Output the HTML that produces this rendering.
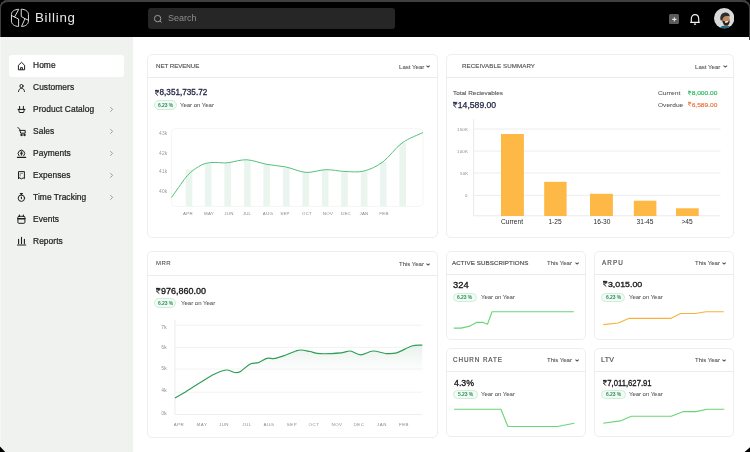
<!DOCTYPE html>
<html><head><meta charset="utf-8"><style>
html,body{margin:0;padding:0;background:#000;width:750px;height:452px;overflow:hidden}
*{box-sizing:border-box}
.frame{position:absolute;left:0;top:0;width:750px;height:452px;background:#fff;border-radius:8px 8px 0 0;overflow:hidden;font-family:"Liberation Sans", sans-serif}
.t{position:absolute;white-space:nowrap;font-family:"Liberation Sans", sans-serif;will-change:transform}
.hdr{position:absolute;left:0;top:0;width:750px;height:37px;background:#000}
.hb{position:absolute;left:0;top:0;width:750px;height:40px;border-top:2px solid #404040;border-left:1.2px solid #404040;border-right:1.2px solid #404040;border-radius:8px 8px 0 0}
.hdr .t{}
.search{position:absolute;left:148px;top:8px;width:247px;height:21px;background:#262626;border-radius:3px}
.side{position:absolute;left:0;top:37px;width:133.4px;height:415px;background:#f0f2ef;border-left:1px solid #f6f7f5}
.card{position:absolute;border:1px solid #eeeeee;border-radius:5px;background:#fff}
</style></head><body><div class="frame">
<div class="hdr"><svg style="position:absolute;left:0;top:0" width="40" height="36" viewBox="0 0 40 36" fill="none" stroke="#e6e6e6" stroke-width="0.95" stroke-linejoin="round" stroke-linecap="round">
<path d="M18.4 9.3 C14.4 9.5 11.5 11.4 11.45 14.4 L11.45 21.2 C11.6 24.3 14.6 26.3 18.6 26.45 L18.6 19 L14.9 17.2 Z M11.45 15.5 L14.9 17.2"/>
<path d="M21.6 9.2 C25.5 9.3 28.4 11.5 28.45 14.4 L28.45 21.2 C28.3 24.3 25.4 26.3 21.5 26.45 L25 18.7 L21.6 16.7 Z M25 18.7 L28.45 20.2"/>
</svg>
<div class="t" style="left:34.90px;top:10.94px;font-size:13.30px;line-height:13.30px;color:#e8e8e8;font-weight:400;letter-spacing:0.75px;">Billing</div>
<div class="search"></div><svg style="position:absolute;left:153px;top:13.7px" width="10" height="10" viewBox="0 0 10 10" fill="none" stroke="#9a9a9a" stroke-width="1"><circle cx="4.6" cy="4.6" r="3.2"/><path d="M7 7 L8.6 8.6"/></svg>
<div class="t" style="left:167.70px;top:14.38px;font-size:9.00px;line-height:9.00px;color:#8d8d8d;font-weight:400;letter-spacing:0.00px;">Search</div>
<div style="position:absolute;left:668.7px;top:13.6px;width:10.7px;height:10.7px;background:#5b5b5b;border-radius:1.5px"></div>
<svg style="position:absolute;left:668.7px;top:13.6px" width="11" height="11" viewBox="0 0 11 11"><path d="M5.35 3.2 V7.5 M3.2 5.35 H7.5" stroke="#e6e6e6" stroke-width="1.05"/></svg>
<svg style="position:absolute;left:688px;top:12px" width="14" height="14" viewBox="0 0 14 14" fill="none" stroke="#f2f2f2" stroke-width="1.15"><path d="M3.3 10.2 V7 C3.3 4.3 4.8 2.6 7 2.6 C9.2 2.6 10.7 4.3 10.7 7 V10.2"/><path d="M2.2 10.4 H11.8"/><path d="M5.9 12.1 H8.1" stroke-width="1.1"/></svg>
<svg style="position:absolute;left:713.8px;top:8.3px" width="20.4" height="20.4" viewBox="0 0 20 20">
<defs><clipPath id="av"><circle cx="10" cy="10" r="10"/></clipPath></defs>
<g clip-path="url(#av)"><rect width="20" height="20" fill="#dadada"/>
<path d="M5 21 C5.8 18.8 7.6 17.6 9.8 17.5 L13.4 17.5 C15.4 17.7 16.8 18.9 17.4 21 Z" fill="#1c6a86"/>
<path d="M9.4 14.5 L13.6 14.8 L13.6 18 L9.8 18 Z" fill="#b07a52"/>
<ellipse cx="11.7" cy="11.5" rx="3.9" ry="4.9" transform="rotate(-22 11.7 11.5)" fill="#c08a60"/>
<path d="M6.4 12 C5.6 8 7 5.2 10.2 4.6 C13 4.2 15.4 5.6 15.6 8.6 C14.6 7.8 12.8 7.6 11 8.2 C9.4 8.8 8.4 10 8.2 12.2 Z" fill="#2f2f2f"/>
<path d="M8.1 12.3 C8.5 15.4 10.2 17.3 12.3 17.2 C14.3 17.1 15.4 15 15.2 12.4 C14.2 13.4 12.3 13.6 10.8 13.2 C9.8 12.9 8.9 12.5 8.1 12.3 Z" fill="#2a211d"/>
<ellipse cx="12.3" cy="13.6" rx="1.7" ry="0.85" transform="rotate(-12 12.3 13.6)" fill="#f1f1f1"/>
</g></svg>
<div class="hb"></div>
</div>
<div class="side"></div>
<div style="position:absolute;left:9px;top:55px;width:115px;height:22px;background:#fff;border-radius:3px"></div>
<svg style="position:absolute;left:0;top:0" width="133" height="452" viewBox="0 0 133 452" fill="none" stroke="#1e1e1e" stroke-width="1.0" stroke-linejoin="round" stroke-linecap="round">
<path d="M18.4 69.4 V65.3 L21.5 62.3 L24.6 65.3 V69.4 Z" /><path d="M20.6 69.4 V67.6 H22.4 V69.4" />
<circle cx="21.5" cy="86.1" r="1.6"/><path d="M18.5 91.5 C18.7 89.5 19.9 88.4 21.5 88.4 C23.1 88.4 24.3 89.5 24.5 91.5"/>
<path d="M19.6 106.4 V109.2 M23.4 106.4 V109.2"/><path d="M18 109.4 H25 M18.6 109.4 L19.4 112.5 H23.6 L24.4 109.4"/>
<path d="M110.6 107.4 L112.6 109.4 L110.6 111.4" stroke="#888" stroke-width="0.8"/>
<path d="M17.9 127.4 L19.6 129.2 L20.7 133.2 H25.2 V130.4 H19.8"/><circle cx="21.4" cy="135" r="0.7" fill="#222"/><circle cx="24.4" cy="135" r="0.7" fill="#222"/>
<path d="M110.6 129.4 L112.6 131.4 L110.6 133.4" stroke="#888" stroke-width="0.8"/>
<path d="M19 155.8 A3.3 3.3 0 1 1 23.8 155.8"/><path d="M21.4 151.2 L20.4 154.0 H22.4 Z" fill="#222" stroke-width="0.5"/><path d="M21.4 154 V155.3" stroke-width="0.9"/><path d="M17.4 157.4 H25.7" stroke-width="1.1"/>
<path d="M110.6 151.4 L112.6 153.4 L110.6 155.4" stroke="#888" stroke-width="0.8"/>
<path d="M18.5 178.6 V171.6 H24.4 V178.6 L23.2 177.9 L21.5 178.8 L19.7 177.9 Z"/><path d="M20.2 176 V173.3 H22.6" stroke="#888" />
<path d="M110.6 173.4 L112.6 175.4 L110.6 177.4" stroke="#888" stroke-width="0.8"/>
<circle cx="21.4" cy="198.2" r="3.2"/><path d="M20.3 193.6 H22.5 M21.4 193.6 V195" stroke-width="1.1"/><path d="M21.4 197 V198.6" stroke-width="1.1"/>
<path d="M110.6 195.4 L112.6 197.4 L110.6 199.4" stroke="#888" stroke-width="0.8"/>
<rect x="17.9" y="216.3" width="7" height="7" rx="1"/><path d="M18 218.8 H24.8" stroke-width="1.6"/><path d="M19.4 215 V216.6 M23.4 215 V216.6"/>
<path d="M18.6 243.6 V239.3 M21.5 243.6 V237.3 M24.4 243.6 V239.3" stroke-width="1.1"/><path d="M17.5 245 H25.7" stroke-width="1.1"/>
</svg>
<div class="t" style="left:33.10px;top:61.49px;font-size:8.40px;line-height:8.40px;color:#1c1c1c;font-weight:400;letter-spacing:0.08px;-webkit-text-stroke:0.22px #1c1c1c;">Home</div>
<div class="t" style="left:33.10px;top:83.49px;font-size:8.40px;line-height:8.40px;color:#1c1c1c;font-weight:400;letter-spacing:0.08px;-webkit-text-stroke:0.22px #1c1c1c;">Customers</div>
<div class="t" style="left:33.10px;top:105.49px;font-size:8.40px;line-height:8.40px;color:#1c1c1c;font-weight:400;letter-spacing:0.08px;-webkit-text-stroke:0.22px #1c1c1c;">Product Catalog</div>
<div class="t" style="left:33.10px;top:127.49px;font-size:8.40px;line-height:8.40px;color:#1c1c1c;font-weight:400;letter-spacing:0.08px;-webkit-text-stroke:0.22px #1c1c1c;">Sales</div>
<div class="t" style="left:33.10px;top:149.49px;font-size:8.40px;line-height:8.40px;color:#1c1c1c;font-weight:400;letter-spacing:0.08px;-webkit-text-stroke:0.22px #1c1c1c;">Payments</div>
<div class="t" style="left:33.10px;top:171.49px;font-size:8.40px;line-height:8.40px;color:#1c1c1c;font-weight:400;letter-spacing:0.08px;-webkit-text-stroke:0.22px #1c1c1c;">Expenses</div>
<div class="t" style="left:33.10px;top:193.49px;font-size:8.40px;line-height:8.40px;color:#1c1c1c;font-weight:400;letter-spacing:0.08px;-webkit-text-stroke:0.22px #1c1c1c;">Time Tracking</div>
<div class="t" style="left:33.10px;top:215.49px;font-size:8.40px;line-height:8.40px;color:#1c1c1c;font-weight:400;letter-spacing:0.08px;-webkit-text-stroke:0.22px #1c1c1c;">Events</div>
<div class="t" style="left:33.10px;top:237.49px;font-size:8.40px;line-height:8.40px;color:#1c1c1c;font-weight:400;letter-spacing:0.08px;-webkit-text-stroke:0.22px #1c1c1c;">Reports</div>
<div class="card" style="left:147.2px;top:53.8px;width:290.8px;height:184.2px"></div><div style="position:absolute;left:147.2px;top:76.9px;width:290.8px;height:0.8px;background:#ececec"></div>
<div class="t" style="left:156.49px;top:63.15px;font-size:6.20px;line-height:6.20px;color:#555;font-weight:400;letter-spacing:-0.06px;-webkit-text-stroke:0.15px #555;">NET REVENUE</div>
<div class="t" style="left:398.50px;top:63.84px;font-size:6.10px;line-height:6.10px;color:#505050;font-weight:400;letter-spacing:-0.01px;-webkit-text-stroke:0.08px #505050;">Last Year</div><svg style="position:absolute;left:426.30px;top:65.40px" width="5" height="3" viewBox="0 0 5 3"><path d="M0.5 0.55 L2.10 2.1 L3.70 0.55" fill="none" stroke="#555" stroke-width="1.1"/></svg>
<div style="position:absolute;left:0;top:0;width:750px;height:452px;will-change:transform"><div class="t" style="left:155.14px;top:88.37px;font-size:8.30px;line-height:8.30px;color:#1f2442;font-weight:400;letter-spacing:0.00px;-webkit-text-stroke:0.30px #1f2442;will-change:auto;transform:scaleX(0.9844);transform-origin:0 0;"><svg style="display:inline-block;vertical-align:baseline;width:0.5em;height:0.69em;margin-right:0.06em;overflow:visible" viewBox="0 0 50 69" fill="none" stroke="currentColor" stroke-width="11" stroke-linejoin="miter"><path d="M1 5 H49 M1 21 H49 M3 5 H15 C28 5 34 12 34 21 C34 31 27 38 14 38 H5 L37 68"/></svg>8,351,735.72</div></div>
<div style="position:absolute;left:154.0px;top:100.4px;width:22.5px;height:9.6px;border:0.9px solid #cdeed8;background:#f3fbf6;border-radius:5px"></div><div class="t" style="left:157.61px;top:102.97px;font-size:5.00px;line-height:5.00px;color:#2f8f55;font-weight:700;letter-spacing:-0.07px;">6.23 %</div>
<div class="t" style="left:180.37px;top:101.72px;font-size:6.00px;line-height:6.00px;color:#555;font-weight:400;letter-spacing:-0.02px;-webkit-text-stroke:0.05px #555;">Year on Year</div>
<svg style="position:absolute;left:0;top:0" width="750" height="452" viewBox="0 0 750 452">
<rect x="171.4" y="128.6" width="251.6" height="77.8" rx="4" fill="none" stroke="#f2f2f2" stroke-width="0.8"/>
<rect x="185.7" y="169.5" width="6.6" height="36.9" fill="#e9f5ee"/>
<rect x="204.9" y="163.5" width="6.6" height="42.9" fill="#e9f5ee"/>
<rect x="224.4" y="162.9" width="6.6" height="43.5" fill="#e9f5ee"/>
<rect x="244.1" y="160.7" width="6.6" height="45.7" fill="#e9f5ee"/>
<rect x="263.3" y="164.4" width="6.6" height="42.0" fill="#e9f5ee"/>
<rect x="283.0" y="167.8" width="6.6" height="38.6" fill="#e9f5ee"/>
<rect x="302.4" y="172.4" width="6.6" height="34.0" fill="#e9f5ee"/>
<rect x="321.9" y="170.6" width="6.6" height="35.8" fill="#e9f5ee"/>
<rect x="341.2" y="172.4" width="6.6" height="34.0" fill="#e9f5ee"/>
<rect x="360.8" y="171.5" width="6.6" height="34.9" fill="#e9f5ee"/>
<rect x="379.9" y="161.8" width="6.6" height="44.6" fill="#e9f5ee"/>
<rect x="399.4" y="143.0" width="6.6" height="63.4" fill="#e9f5ee"/>
<path d="M171.4 197.6 C172.6 195.9 176.3 190.7 178.7 187.3 C181.1 183.9 183.8 179.9 186.0 177.2 C188.2 174.5 189.9 173.0 192.0 171.2 C194.1 169.4 196.4 167.9 198.6 166.6 C200.8 165.3 202.6 164.2 205.2 163.5 C207.8 162.8 211.1 162.5 214.1 162.4 C217.1 162.3 220.2 162.9 222.9 162.9 C225.6 162.9 226.0 162.9 230.0 162.4 C234.0 161.9 240.8 159.5 247.0 159.8 C253.2 160.1 260.5 163.2 267.0 164.4 C273.5 165.6 279.5 165.7 286.0 167.0 C292.5 168.3 299.3 172.0 306.0 172.4 C312.7 172.8 319.5 169.8 326.0 169.7 C332.5 169.5 338.7 171.3 345.0 171.5 C351.3 171.7 357.7 172.6 364.0 171.0 C370.3 169.4 376.7 166.5 383.0 161.8 C389.3 157.1 395.3 147.9 402.0 143.0 C408.7 138.1 419.5 134.3 423.0 132.6" fill="none" stroke="#52c07c" stroke-width="1.0"/>
</svg>
<div class="t" style="right:582.40px;top:131.54px;font-size:4.80px;line-height:4.80px;color:#999;font-weight:400;letter-spacing:0.25px;">43k</div>
<div class="t" style="right:582.40px;top:151.54px;font-size:4.80px;line-height:4.80px;color:#999;font-weight:400;letter-spacing:0.25px;">42k</div>
<div class="t" style="right:582.40px;top:170.24px;font-size:4.80px;line-height:4.80px;color:#999;font-weight:400;letter-spacing:0.25px;">41k</div>
<div class="t" style="right:582.40px;top:189.74px;font-size:4.80px;line-height:4.80px;color:#999;font-weight:400;letter-spacing:0.25px;">40k</div>
<div class="t" style="left:187.80px;transform:translateX(-50%);top:212.18px;font-size:4.40px;line-height:4.40px;color:#888;font-weight:400;letter-spacing:0.30px;">APR</div>
<div class="t" style="left:208.70px;transform:translateX(-50%);top:212.18px;font-size:4.40px;line-height:4.40px;color:#888;font-weight:400;letter-spacing:0.30px;">MAY</div>
<div class="t" style="left:228.80px;transform:translateX(-50%);top:212.18px;font-size:4.40px;line-height:4.40px;color:#888;font-weight:400;letter-spacing:0.30px;">JUN</div>
<div class="t" style="left:247.20px;transform:translateX(-50%);top:212.18px;font-size:4.40px;line-height:4.40px;color:#888;font-weight:400;letter-spacing:0.30px;">JUL</div>
<div class="t" style="left:267.50px;transform:translateX(-50%);top:212.18px;font-size:4.40px;line-height:4.40px;color:#888;font-weight:400;letter-spacing:0.30px;">AUG</div>
<div class="t" style="left:284.80px;transform:translateX(-50%);top:212.18px;font-size:4.40px;line-height:4.40px;color:#888;font-weight:400;letter-spacing:0.30px;">SEP</div>
<div class="t" style="left:306.70px;transform:translateX(-50%);top:212.18px;font-size:4.40px;line-height:4.40px;color:#888;font-weight:400;letter-spacing:0.30px;">OCT</div>
<div class="t" style="left:327.70px;transform:translateX(-50%);top:212.18px;font-size:4.40px;line-height:4.40px;color:#888;font-weight:400;letter-spacing:0.30px;">NOV</div>
<div class="t" style="left:345.60px;transform:translateX(-50%);top:212.18px;font-size:4.40px;line-height:4.40px;color:#888;font-weight:400;letter-spacing:0.30px;">DEC</div>
<div class="t" style="left:364.00px;transform:translateX(-50%);top:212.18px;font-size:4.40px;line-height:4.40px;color:#888;font-weight:400;letter-spacing:0.30px;">JAN</div>
<div class="t" style="left:384.00px;transform:translateX(-50%);top:212.18px;font-size:4.40px;line-height:4.40px;color:#888;font-weight:400;letter-spacing:0.30px;">FEB</div>
<div class="card" style="left:445.8px;top:53.8px;width:288.0px;height:184.2px"></div><div style="position:absolute;left:445.8px;top:76.9px;width:288.0px;height:0.8px;background:#ececec"></div>
<div class="t" style="left:462.49px;top:63.15px;font-size:6.20px;line-height:6.20px;color:#555;font-weight:400;letter-spacing:0.08px;-webkit-text-stroke:0.15px #555;">RECEIVABLE SUMMARY</div>
<div class="t" style="left:695.40px;top:63.84px;font-size:6.10px;line-height:6.10px;color:#505050;font-weight:400;letter-spacing:-0.01px;-webkit-text-stroke:0.08px #505050;">Last Year</div><svg style="position:absolute;left:723.20px;top:65.40px" width="5" height="3" viewBox="0 0 5 3"><path d="M0.5 0.55 L2.30 2.1 L4.10 0.55" fill="none" stroke="#555" stroke-width="1.1"/></svg>
<div style="position:absolute;left:0;top:0;width:750px;height:452px;will-change:transform"><div class="t" style="left:453.16px;top:89.92px;font-size:6.00px;line-height:6.00px;color:#555;font-weight:400;letter-spacing:0.00px;-webkit-text-stroke:0.10px #555;will-change:auto;transform:scaleX(1.0625);transform-origin:0 0;">Total Recievables</div></div>
<div style="position:absolute;left:0;top:0;width:750px;height:452px;will-change:transform"><div class="t" style="left:453.13px;top:100.87px;font-size:8.30px;line-height:8.30px;color:#1f2442;font-weight:400;letter-spacing:0.00px;-webkit-text-stroke:0.25px #1f2442;will-change:auto;transform:scaleX(1.0393);transform-origin:0 0;"><svg style="display:inline-block;vertical-align:baseline;width:0.5em;height:0.69em;margin-right:0.06em;overflow:visible" viewBox="0 0 50 69" fill="none" stroke="currentColor" stroke-width="11" stroke-linejoin="miter"><path d="M1 5 H49 M1 21 H49 M3 5 H15 C28 5 34 12 34 21 C34 31 27 38 14 38 H5 L37 68"/></svg>14,589.00</div></div>
<div style="position:absolute;left:0;top:0;width:750px;height:452px;will-change:transform"><div class="t" style="left:657.66px;top:90.12px;font-size:6.00px;line-height:6.00px;color:#555;font-weight:400;letter-spacing:0.00px;-webkit-text-stroke:0.05px #555;will-change:auto;transform:scaleX(1.1187);transform-origin:0 0;">Current</div></div>
<div style="position:absolute;left:0;top:0;width:750px;height:452px;will-change:transform"><div class="t" style="left:687.87px;top:90.04px;font-size:6.10px;line-height:6.10px;color:#22b65a;font-weight:400;letter-spacing:0.00px;-webkit-text-stroke:0.15px #22b65a;will-change:auto;transform:scaleX(1.0817);transform-origin:0 0;"><svg style="display:inline-block;vertical-align:baseline;width:0.5em;height:0.69em;margin-right:0.06em;overflow:visible" viewBox="0 0 50 69" fill="none" stroke="currentColor" stroke-width="11" stroke-linejoin="miter"><path d="M1 5 H49 M1 21 H49 M3 5 H15 C28 5 34 12 34 21 C34 31 27 38 14 38 H5 L37 68"/></svg>8,000.00</div></div>
<div style="position:absolute;left:0;top:0;width:750px;height:452px;will-change:transform"><div class="t" style="left:657.69px;top:101.72px;font-size:6.00px;line-height:6.00px;color:#555;font-weight:400;letter-spacing:0.00px;-webkit-text-stroke:0.05px #555;will-change:auto;transform:scaleX(1.0948);transform-origin:0 0;">Overdue</div></div>
<div style="position:absolute;left:0;top:0;width:750px;height:452px;will-change:transform"><div class="t" style="left:687.87px;top:101.64px;font-size:6.10px;line-height:6.10px;color:#ea7038;font-weight:400;letter-spacing:0.00px;-webkit-text-stroke:0.15px #ea7038;will-change:auto;transform:scaleX(1.0817);transform-origin:0 0;"><svg style="display:inline-block;vertical-align:baseline;width:0.5em;height:0.69em;margin-right:0.06em;overflow:visible" viewBox="0 0 50 69" fill="none" stroke="currentColor" stroke-width="11" stroke-linejoin="miter"><path d="M1 5 H49 M1 21 H49 M3 5 H15 C28 5 34 12 34 21 C34 31 27 38 14 38 H5 L37 68"/></svg>6,589.00</div></div>
<svg style="position:absolute;left:0;top:0" width="750" height="452" viewBox="0 0 750 452">
<path d="M473.6 129.0 H720.5" stroke="#ebebeb" stroke-width="0.9"/>
<path d="M473.6 151.1 H720.5" stroke="#ebebeb" stroke-width="0.9"/>
<path d="M473.6 173.0 H720.5" stroke="#ebebeb" stroke-width="0.9"/>
<path d="M473.6 195.4 H720.5" stroke="#ebebeb" stroke-width="0.9"/>
<path d="M473.6 215.8 H720.5" stroke="#e8e8e8" stroke-width="0.9"/>
<path d="M473.6 119.3 V216" stroke="#e8e8e8" stroke-width="0.9"/>
<rect x="501.0" y="134.0" width="22.9" height="82.0" fill="#fdb845"/>
<rect x="544.2" y="181.8" width="22.4" height="34.2" fill="#fdb845"/>
<rect x="590.0" y="193.8" width="22.9" height="22.2" fill="#fdb845"/>
<rect x="633.8" y="200.7" width="22.6" height="15.3" fill="#fdb845"/>
<rect x="676.0" y="208.3" width="22.7" height="7.7" fill="#fdb845"/>
</svg>
<div class="t" style="right:282.00px;top:127.98px;font-size:4.40px;line-height:4.40px;color:#8a8a8a;font-weight:400;letter-spacing:0.20px;">150K</div>
<div class="t" style="right:282.00px;top:149.58px;font-size:4.40px;line-height:4.40px;color:#8a8a8a;font-weight:400;letter-spacing:0.20px;">100K</div>
<div class="t" style="right:282.00px;top:171.58px;font-size:4.40px;line-height:4.40px;color:#8a8a8a;font-weight:400;letter-spacing:0.20px;">50K</div>
<div class="t" style="right:282.00px;top:193.88px;font-size:4.40px;line-height:4.40px;color:#8a8a8a;font-weight:400;letter-spacing:0.20px;">0</div>
<div class="t" style="left:512.40px;transform:translateX(-50%);top:218.61px;font-size:6.60px;line-height:6.60px;color:#2a2a2a;font-weight:400;letter-spacing:0.00px;">Current</div>
<div class="t" style="left:555.40px;transform:translateX(-50%);top:218.61px;font-size:6.60px;line-height:6.60px;color:#2a2a2a;font-weight:400;letter-spacing:0.00px;">1-25</div>
<div class="t" style="left:601.50px;transform:translateX(-50%);top:218.61px;font-size:6.60px;line-height:6.60px;color:#2a2a2a;font-weight:400;letter-spacing:0.00px;">16-30</div>
<div class="t" style="left:645.10px;transform:translateX(-50%);top:218.61px;font-size:6.60px;line-height:6.60px;color:#2a2a2a;font-weight:400;letter-spacing:0.00px;">31-45</div>
<div class="t" style="left:687.40px;transform:translateX(-50%);top:218.61px;font-size:6.60px;line-height:6.60px;color:#2a2a2a;font-weight:400;letter-spacing:0.00px;">&gt;45</div>
<div class="card" style="left:147.2px;top:250.7px;width:290.8px;height:187.1px"></div><div style="position:absolute;left:147.2px;top:274.5px;width:290.8px;height:0.8px;background:#ececec"></div>
<div class="t" style="left:155.70px;top:259.82px;font-size:6.00px;line-height:6.00px;color:#555;font-weight:400;letter-spacing:0.41px;-webkit-text-stroke:0.10px #555;">MRR</div>
<div class="t" style="left:398.87px;top:261.22px;font-size:6.00px;line-height:6.00px;color:#505050;font-weight:400;letter-spacing:-0.01px;-webkit-text-stroke:0.08px #505050;">This Year</div><svg style="position:absolute;left:426.30px;top:262.70px" width="5" height="3" viewBox="0 0 5 3"><path d="M0.5 0.55 L2.10 2.1 L3.70 0.55" fill="none" stroke="#555" stroke-width="1.1"/></svg>
<div style="position:absolute;left:0;top:0;width:750px;height:452px;will-change:transform"><div class="t" style="left:155.92px;top:286.97px;font-size:8.30px;line-height:8.30px;color:#151515;font-weight:400;letter-spacing:0.00px;-webkit-text-stroke:0.30px #151515;will-change:auto;transform:scaleX(1.0807);transform-origin:0 0;"><svg style="display:inline-block;vertical-align:baseline;width:0.5em;height:0.69em;margin-right:0.06em;overflow:visible" viewBox="0 0 50 69" fill="none" stroke="currentColor" stroke-width="11" stroke-linejoin="miter"><path d="M1 5 H49 M1 21 H49 M3 5 H15 C28 5 34 12 34 21 C34 31 27 38 14 38 H5 L37 68"/></svg>976,860.00</div></div>
<div style="position:absolute;left:154.4px;top:298.4px;width:22.1px;height:9.9px;border:0.9px solid #cdeed8;background:#f3fbf6;border-radius:5px"></div><div class="t" style="left:157.81px;top:301.12px;font-size:5.00px;line-height:5.00px;color:#2f8f55;font-weight:700;letter-spacing:-0.07px;">6.23 %</div>
<div class="t" style="left:181.06px;top:300.12px;font-size:6.00px;line-height:6.00px;color:#555;font-weight:400;letter-spacing:-0.00px;-webkit-text-stroke:0.05px #555;">Year on Year</div>
<svg style="position:absolute;left:0;top:0" width="750" height="452" viewBox="0 0 750 452">
<defs><linearGradient id="mg" gradientUnits="userSpaceOnUse" x1="0" y1="345" x2="0" y2="375"><stop offset="0" stop-color="#e6f1ea" stop-opacity="1"/><stop offset="1" stop-color="#f3f6f4" stop-opacity="0"/></linearGradient></defs>
<path d="M175 325.2 H422.3" stroke="#efefef" stroke-width="0.8"/>
<path d="M175 347.4 H422.3" stroke="#efefef" stroke-width="0.8"/>
<path d="M175 369.0 H422.3" stroke="#efefef" stroke-width="0.8"/>
<path d="M175 392.2 H422.3" stroke="#efefef" stroke-width="0.8"/>
<path d="M175 414.6 H422.3" stroke="#e9e9e9" stroke-width="0.8"/>
<path d="M174.9 319.7 V414.6" stroke="#e9e9e9" stroke-width="0.8"/>
<path d="M174.9 398.0 C176.4 397.2 179.4 395.6 183.7 393.0 C187.9 390.4 195.3 385.6 200.4 382.5 C205.5 379.4 209.9 376.3 214.2 374.2 C218.5 372.1 222.6 370.3 226.1 370.0 C229.6 369.7 232.6 372.3 235.0 372.5 C237.4 372.7 238.0 372.8 240.5 371.4 C243.0 370.0 247.2 365.5 250.2 364.0 C253.2 362.5 255.7 363.5 258.5 362.6 C261.3 361.7 264.1 359.1 266.8 358.4 C269.6 357.7 271.8 359.0 275.0 358.4 C278.2 357.8 282.5 356.2 286.0 355.0 C289.5 353.8 293.3 351.8 295.8 351.0 C298.3 350.2 298.6 349.9 301.0 350.0 C303.4 350.1 306.8 350.9 310.0 351.5 C313.2 352.1 315.2 353.5 320.4 353.7 C325.6 353.9 336.2 353.3 341.2 352.9 C346.2 352.4 347.1 350.7 350.3 351.0 C353.5 351.3 356.8 354.8 360.6 354.8 C364.4 354.8 368.9 351.2 373.0 351.0 C377.1 350.8 381.6 353.2 385.5 353.5 C389.4 353.8 392.2 354.1 396.6 352.9 C401.0 351.6 407.5 347.3 411.8 346.0 C416.1 344.7 420.6 345.3 422.3 345.2 L422.3 414.6 L174.9 414.6 Z" fill="url(#mg)"/>
<path d="M174.9 398.0 C176.4 397.2 179.4 395.6 183.7 393.0 C187.9 390.4 195.3 385.6 200.4 382.5 C205.5 379.4 209.9 376.3 214.2 374.2 C218.5 372.1 222.6 370.3 226.1 370.0 C229.6 369.7 232.6 372.3 235.0 372.5 C237.4 372.7 238.0 372.8 240.5 371.4 C243.0 370.0 247.2 365.5 250.2 364.0 C253.2 362.5 255.7 363.5 258.5 362.6 C261.3 361.7 264.1 359.1 266.8 358.4 C269.6 357.7 271.8 359.0 275.0 358.4 C278.2 357.8 282.5 356.2 286.0 355.0 C289.5 353.8 293.3 351.8 295.8 351.0 C298.3 350.2 298.6 349.9 301.0 350.0 C303.4 350.1 306.8 350.9 310.0 351.5 C313.2 352.1 315.2 353.5 320.4 353.7 C325.6 353.9 336.2 353.3 341.2 352.9 C346.2 352.4 347.1 350.7 350.3 351.0 C353.5 351.3 356.8 354.8 360.6 354.8 C364.4 354.8 368.9 351.2 373.0 351.0 C377.1 350.8 381.6 353.2 385.5 353.5 C389.4 353.8 392.2 354.1 396.6 352.9 C401.0 351.6 407.5 347.3 411.8 346.0 C416.1 344.7 420.6 345.3 422.3 345.2" fill="none" stroke="#2f9e57" stroke-width="1.2"/>
</svg>
<div class="t" style="left:164.40px;transform:translateX(-50%);top:326.44px;font-size:4.80px;line-height:4.80px;color:#888;font-weight:400;letter-spacing:0.10px;">7k</div>
<div class="t" style="left:164.40px;transform:translateX(-50%);top:345.84px;font-size:4.80px;line-height:4.80px;color:#888;font-weight:400;letter-spacing:0.10px;">6k</div>
<div class="t" style="left:164.40px;transform:translateX(-50%);top:367.44px;font-size:4.80px;line-height:4.80px;color:#888;font-weight:400;letter-spacing:0.10px;">5k</div>
<div class="t" style="left:164.40px;transform:translateX(-50%);top:389.24px;font-size:4.80px;line-height:4.80px;color:#888;font-weight:400;letter-spacing:0.10px;">4k</div>
<div class="t" style="left:164.40px;transform:translateX(-50%);top:411.64px;font-size:4.80px;line-height:4.80px;color:#888;font-weight:400;letter-spacing:0.10px;">0k</div>
<div class="t" style="left:178.80px;transform:translateX(-50%);top:422.58px;font-size:4.40px;line-height:4.40px;color:#888;font-weight:400;letter-spacing:0.55px;">APR</div>
<div class="t" style="left:201.70px;transform:translateX(-50%);top:422.58px;font-size:4.40px;line-height:4.40px;color:#888;font-weight:400;letter-spacing:0.55px;">MAY</div>
<div class="t" style="left:223.90px;transform:translateX(-50%);top:422.58px;font-size:4.40px;line-height:4.40px;color:#888;font-weight:400;letter-spacing:0.55px;">JUN</div>
<div class="t" style="left:246.60px;transform:translateX(-50%);top:422.58px;font-size:4.40px;line-height:4.40px;color:#888;font-weight:400;letter-spacing:0.55px;">JUL</div>
<div class="t" style="left:269.00px;transform:translateX(-50%);top:422.58px;font-size:4.40px;line-height:4.40px;color:#888;font-weight:400;letter-spacing:0.55px;">AUG</div>
<div class="t" style="left:291.70px;transform:translateX(-50%);top:422.58px;font-size:4.40px;line-height:4.40px;color:#888;font-weight:400;letter-spacing:0.55px;">SEP</div>
<div class="t" style="left:314.00px;transform:translateX(-50%);top:422.58px;font-size:4.40px;line-height:4.40px;color:#888;font-weight:400;letter-spacing:0.55px;">OCT</div>
<div class="t" style="left:336.50px;transform:translateX(-50%);top:422.58px;font-size:4.40px;line-height:4.40px;color:#888;font-weight:400;letter-spacing:0.55px;">NOV</div>
<div class="t" style="left:359.20px;transform:translateX(-50%);top:422.58px;font-size:4.40px;line-height:4.40px;color:#888;font-weight:400;letter-spacing:0.55px;">DEC</div>
<div class="t" style="left:381.90px;transform:translateX(-50%);top:422.58px;font-size:4.40px;line-height:4.40px;color:#888;font-weight:400;letter-spacing:0.55px;">JAN</div>
<div class="t" style="left:404.00px;transform:translateX(-50%);top:422.58px;font-size:4.40px;line-height:4.40px;color:#888;font-weight:400;letter-spacing:0.55px;">FEB</div>
<div class="card" style="left:445.8px;top:250.8px;width:140.2px;height:89.1px"></div><div style="position:absolute;left:445.8px;top:273.9px;width:140.2px;height:0.8px;background:#ececec"></div><div class="t" style="left:451.98px;top:260.35px;font-size:6.20px;line-height:6.20px;color:#555;font-weight:400;letter-spacing:0.09px;-webkit-text-stroke:0.20px #555;">ACTIVE SUBSCRIPTIONS</div><div class="t" style="left:547.07px;top:260.22px;font-size:6.00px;line-height:6.00px;color:#505050;font-weight:400;letter-spacing:-0.01px;-webkit-text-stroke:0.08px #505050;">This Year</div><svg style="position:absolute;left:574.50px;top:261.70px" width="5" height="3" viewBox="0 0 5 3"><path d="M0.5 0.55 L2.10 2.1 L3.70 0.55" fill="none" stroke="#555" stroke-width="1.1"/></svg><div style="position:absolute;left:0;top:0;width:750px;height:452px;will-change:transform"><div class="t" style="left:453.15px;top:280.98px;font-size:9.00px;line-height:9.00px;color:#151515;font-weight:400;letter-spacing:0.00px;-webkit-text-stroke:0.30px #151515;will-change:auto;transform:scaleX(1.0400);transform-origin:0 0;">324</div></div><div style="position:absolute;left:453.1px;top:292.5px;width:23.9px;height:9.9px;border:0.9px solid #cdeed8;background:#f3fbf6;border-radius:5px"></div><div class="t" style="left:457.41px;top:295.22px;font-size:5.00px;line-height:5.00px;color:#2f8f55;font-weight:700;letter-spacing:-0.07px;">6.23 %</div><div class="t" style="left:480.76px;top:294.12px;font-size:6.00px;line-height:6.00px;color:#555;font-weight:400;letter-spacing:-0.03px;-webkit-text-stroke:0.05px #555;">Year on Year</div><svg style="position:absolute;left:0;top:0" width="750" height="452" viewBox="0 0 750 452"><path d="M453.7 328.1 L461.0 328.1 L469.8 326.1 L476.5 322.4 L483.1 322.4 L487.5 324.2 L492.0 311.8 L573.8 311.8" fill="none" stroke="#68d676" stroke-width="1.1" stroke-linejoin="round"/></svg>
<div class="card" style="left:594.0px;top:250.8px;width:139.8px;height:89.1px"></div><div style="position:absolute;left:594.0px;top:273.8px;width:139.8px;height:0.8px;background:#ececec"></div><div class="t" style="left:601.98px;top:259.67px;font-size:6.30px;line-height:6.30px;color:#555;font-weight:400;letter-spacing:1.07px;-webkit-text-stroke:0.20px #555;">ARPU</div><div class="t" style="left:694.87px;top:260.22px;font-size:6.00px;line-height:6.00px;color:#505050;font-weight:400;letter-spacing:-0.01px;-webkit-text-stroke:0.08px #505050;">This Year</div><svg style="position:absolute;left:722.30px;top:261.70px" width="5" height="3" viewBox="0 0 5 3"><path d="M0.5 0.55 L2.10 2.1 L3.70 0.55" fill="none" stroke="#555" stroke-width="1.1"/></svg><div style="position:absolute;left:0;top:0;width:750px;height:452px;will-change:transform"><div class="t" style="left:602.72px;top:281.04px;font-size:8.10px;line-height:8.10px;color:#151515;font-weight:400;letter-spacing:0.00px;-webkit-text-stroke:0.30px #151515;will-change:auto;transform:scaleX(1.0899);transform-origin:0 0;"><svg style="display:inline-block;vertical-align:baseline;width:0.5em;height:0.69em;margin-right:0.06em;overflow:visible" viewBox="0 0 50 69" fill="none" stroke="currentColor" stroke-width="11" stroke-linejoin="miter"><path d="M1 5 H49 M1 21 H49 M3 5 H15 C28 5 34 12 34 21 C34 31 27 38 14 38 H5 L37 68"/></svg>3,015.00</div></div><div style="position:absolute;left:601.3px;top:292.6px;width:23.7px;height:9.4px;border:0.9px solid #cdeed8;background:#f3fbf6;border-radius:5px"></div><div class="t" style="left:605.51px;top:295.07px;font-size:5.00px;line-height:5.00px;color:#2f8f55;font-weight:700;letter-spacing:-0.07px;">6.23 %</div><div class="t" style="left:628.87px;top:294.02px;font-size:6.00px;line-height:6.00px;color:#555;font-weight:400;letter-spacing:-0.04px;-webkit-text-stroke:0.05px #555;">Year on Year</div><svg style="position:absolute;left:0;top:0" width="750" height="452" viewBox="0 0 750 452"><path d="M603.3 324.6 L618.3 323.0 L628.7 318.4 L670.7 318.4 L680.6 313.5 L695.0 313.5 L706.0 311.8 L723.8 311.8" fill="none" stroke="#f6b23c" stroke-width="1.1" stroke-linejoin="round"/></svg>
<div class="card" style="left:445.8px;top:348.0px;width:140.2px;height:89.0px"></div><div style="position:absolute;left:445.8px;top:371.3px;width:140.2px;height:0.8px;background:#ececec"></div><div class="t" style="left:453.38px;top:356.62px;font-size:6.30px;line-height:6.30px;color:#555;font-weight:400;letter-spacing:0.90px;-webkit-text-stroke:0.20px #555;">CHURN RATE</div><div class="t" style="left:547.07px;top:357.42px;font-size:6.00px;line-height:6.00px;color:#505050;font-weight:400;letter-spacing:-0.01px;-webkit-text-stroke:0.08px #505050;">This Year</div><svg style="position:absolute;left:574.50px;top:358.90px" width="5" height="3" viewBox="0 0 5 3"><path d="M0.5 0.55 L2.10 2.1 L3.70 0.55" fill="none" stroke="#555" stroke-width="1.1"/></svg><div style="position:absolute;left:0;top:0;width:750px;height:452px;will-change:transform"><div class="t" style="left:453.70px;top:378.62px;font-size:8.60px;line-height:8.60px;color:#151515;font-weight:400;letter-spacing:0.00px;-webkit-text-stroke:0.30px #151515;will-change:auto;transform:scaleX(1.0202);transform-origin:0 0;">4.3%</div></div><div style="position:absolute;left:453.3px;top:389.7px;width:25.1px;height:9.6px;border:0.9px solid #cdeed8;background:#f3fbf6;border-radius:5px"></div><div class="t" style="left:458.25px;top:392.27px;font-size:5.00px;line-height:5.00px;color:#2f8f55;font-weight:700;letter-spacing:-0.08px;">5.23 %</div><div class="t" style="left:480.76px;top:391.22px;font-size:6.00px;line-height:6.00px;color:#555;font-weight:400;letter-spacing:-0.03px;-webkit-text-stroke:0.05px #555;">Year on Year</div><svg style="position:absolute;left:0;top:0" width="750" height="452" viewBox="0 0 750 452"><path d="M454.0 409.3 L500.9 409.3 L507.9 426.5 L557.4 426.5 L574.3 423.2" fill="none" stroke="#68d676" stroke-width="1.1" stroke-linejoin="round"/></svg>
<div class="card" style="left:594.0px;top:348.0px;width:139.8px;height:89.0px"></div><div style="position:absolute;left:594.0px;top:371.0px;width:139.8px;height:0.8px;background:#ececec"></div><div class="t" style="left:601.22px;top:356.47px;font-size:7.00px;line-height:7.00px;color:#555;font-weight:400;letter-spacing:0.28px;-webkit-text-stroke:0.20px #555;">LTV</div><div class="t" style="left:694.87px;top:357.42px;font-size:6.00px;line-height:6.00px;color:#505050;font-weight:400;letter-spacing:-0.01px;-webkit-text-stroke:0.08px #505050;">This Year</div><svg style="position:absolute;left:722.30px;top:358.90px" width="5" height="3" viewBox="0 0 5 3"><path d="M0.5 0.55 L2.10 2.1 L3.70 0.55" fill="none" stroke="#555" stroke-width="1.1"/></svg><div style="position:absolute;left:0;top:0;width:750px;height:452px;will-change:transform"><div class="t" style="left:603.15px;top:378.87px;font-size:8.30px;line-height:8.30px;color:#151515;font-weight:400;letter-spacing:0.00px;-webkit-text-stroke:0.30px #151515;will-change:auto;transform:scaleX(0.9269);transform-origin:0 0;"><svg style="display:inline-block;vertical-align:baseline;width:0.5em;height:0.69em;margin-right:0.06em;overflow:visible" viewBox="0 0 50 69" fill="none" stroke="currentColor" stroke-width="11" stroke-linejoin="miter"><path d="M1 5 H49 M1 21 H49 M3 5 H15 C28 5 34 12 34 21 C34 31 27 38 14 38 H5 L37 68"/></svg>7,011,627.91</div></div><div style="position:absolute;left:601.3px;top:389.7px;width:24.7px;height:9.8px;border:0.9px solid #cdeed8;background:#f3fbf6;border-radius:5px"></div><div class="t" style="left:606.01px;top:392.37px;font-size:5.00px;line-height:5.00px;color:#2f8f55;font-weight:700;letter-spacing:-0.07px;">6.23 %</div><div class="t" style="left:628.87px;top:391.22px;font-size:6.00px;line-height:6.00px;color:#555;font-weight:400;letter-spacing:-0.04px;-webkit-text-stroke:0.05px #555;">Year on Year</div><svg style="position:absolute;left:0;top:0" width="750" height="452" viewBox="0 0 750 452"><path d="M603.2 423.2 L620.2 420.9 L631.4 416.2 L671.3 416.2 L683.4 411.6 L695.7 411.6 L707.4 409.3 L724.3 409.3" fill="none" stroke="#68d676" stroke-width="1.1" stroke-linejoin="round"/></svg>
<svg style="position:absolute;left:0;top:0" width="750" height="452" viewBox="0 0 750 452"><path d="M0 446.6 L5.2 452 L0 452 Z M744.6 452 L750 447.2 L750 452 Z" fill="#000"/></svg>
</div></body></html>
